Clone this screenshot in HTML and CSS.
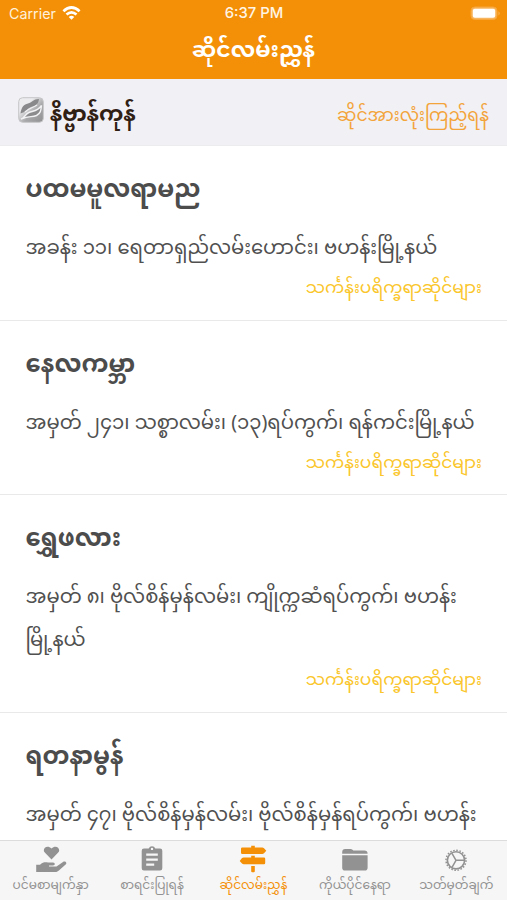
FILE: index.html
```html
<!DOCTYPE html>
<html lang="my">
<head>
<meta charset="utf-8">
<title>ဆိုင်လမ်းညွှန်</title>
<link rel="stylesheet" href="styles.css">
</head>
<body>
<div class="app">
  <header class="top">
    <div class="status">
      <div class="carrier"><span>Carrier</span>
        <svg width="19" height="14" viewBox="0 0 18 14" fill="none" stroke="#fff" stroke-width="2.7"><path d="M.9 5.2Q9-2.2 17.1 5.2M4 8.6q5-4.500 10 0"/><path d="M9 13.7 6.200 10.900q2.800-2.300 5.600 0z" fill="#fff" stroke="none"/></svg>
      </div>
      <time>6:37 PM</time>
      <div class="power">
        <svg width="31" height="15" viewBox="0 0 31 15"><rect x="1" y="1" width="26" height="12.5" rx="3.8" fill="#f8b55d" stroke="#f6a63c"/><rect x="2.800" y="2.800" width="22.400" height="9" rx="2" fill="#fff"/><path d="M28.500 5.200q2.400 2 0 4.300z" fill="#f8b55d"/></svg>
      </div>
    </div>
    <h1><span>ဆိုင်လမ်းညွှန်</span></h1>
  </header>
  <section class="brand">
    <svg class="logo" width="26" height="26" viewBox="0 0 26 26"><defs><linearGradient id="g" x1="0" y1="0" x2="1" y2="1"><stop offset=".3" stop-color="#ececef"/><stop offset=".6" stop-color="#a8a8aa"/><stop offset="1" stop-color="#8f8f91"/></linearGradient></defs><rect x=".7" y=".7" width="24.600" height="24.600" rx="4" fill="url(#g)" stroke="#c6c6c8"/><path d="M2.500 16.500C3.500 9.500 6 7.500 10 6.500c4-1 5-4.500 11-4.500-.5 3-1 4.500-3 6-2 1.600-3.500 1.300-6 2.500-3 1.500-4 4.500-9.500 6z" fill="#89898b"/><path d="M3 22c3.500-1 4-5 8-6.500 4-1.600 9-1.500 12.500-7-.5 5-1 8-5 10-5 2.300-7-.5-15.500 3.500z" fill="#8b8b8d" stroke="#f2f2f4" stroke-width="1.400"/><path d="M7 15c3.500-4 8-4 12-7" fill="none" stroke="#f0f0f2" stroke-width="1.200"/></svg>
    <h2>နိဗ္ဗာန်ကုန်</h2>
    <a class="all">ဆိုင်အားလုံးကြည့်ရန်</a>
  </section>
  <main class="shops">
    <article><h3>ပထမမူလရာမည</h3><p>အခန်း ၁၁၊ ရေတာရှည်လမ်းဟောင်း၊ ဗဟန်းမြို့နယ်</p><div class="kind">သင်္ကန်းပရိက္ခရာဆိုင်များ</div></article>
    <article><h3>နေလကမ္ဘာ</h3><p>အမှတ် ၂၄၁၊ သစ္စာလမ်း၊ (၁၃)ရပ်ကွက်၊ ရန်ကင်းမြို့နယ်</p><div class="kind">သင်္ကန်းပရိက္ခရာဆိုင်များ</div></article>
    <article><h3>ရွှေဖလား</h3><p>အမှတ် ၈၊ ဗိုလ်စိန်မှန်လမ်း၊ ကျိုက္ကဆံရပ်ကွက်၊ ဗဟန်း<br>မြို့နယ်</p><div class="kind">သင်္ကန်းပရိက္ခရာဆိုင်များ</div></article>
    <article><h3>ရတနာမွန်</h3><p>အမှတ် ၄၇၊ ဗိုလ်စိန်မှန်လမ်း၊ ဗိုလ်စိန်မှန်ရပ်ကွက်၊ ဗဟန်း</p></article>
  </main>
  <nav class="tabs">
    <a><svg width="32" height="28" viewBox="0 0 32 28"><path d="M16.500 14.500 9.800 7.600C6.500 3.800 12-.9 16.500 3.400c4.500-4.300 10 .4 6.700 4.200z"/><path d="M1.200 19.800H5c2.800-2.600 5-2.700 8-2.300h5c2.400 0 2.400 3 0 3h-4v1h7.500l6.500-4.500c2-1.200 4.300.5 2.900 2.200l-7 6.300c-1 .9-2 1.500-3.500 1.500H1.200z"/></svg><span>ပင်မစာမျက်နှာ</span></a>
    <a><svg width="32" height="28" viewBox="0 0 32 28"><path fill-rule="evenodd" d="M8 3.500h4.700a3.600 3.600 0 0 1 6.600 0H24q2.300 0 2.300 2.300v17.400q0 2.300-2.300 2.300H8q-2.300 0-2.300-2.300V5.800Q5.700 3.500 8 3.500zm8-.8a1.200 1.200 0 1 0 0 2.400 1.200 1.200 0 0 0 0-2.400zM10.200 8.500v2.200h11.600V8.500zm0 5v2.200h11.600v-2.200zm0 5v2.200h8v-2.200z"/></svg><span>စာရင်းပြုရန်</span></a>
    <a class="on"><svg width="32" height="28" viewBox="0 0 32 28"><path d="M5.200 2.500h9V.8h3.600v1.700h7.500q1 0 1.700.7l2.300 2.500-2.300 2.500q-.7.700-1.700.7H5.200q-1.200 0-1.200-1.200V3.700q0-1.200 1.200-1.200zM14.200 10.800h3.600v1.600H27q1.200 0 1.200 1.200v4.500q0 1.200-1.200 1.200H6.700q-1 0-1.700-.7l-2.300-2.700L5 13.100q.7-.7 1.700-.7h7.500zm0 10.200h3.600v5.200q0 1-1 1h-1.600q-1 0-1-1z"/></svg><span>ဆိုင်လမ်းညွှန်</span></a>
    <a><svg width="32" height="28" viewBox="0 0 32 28"><path d="M3.200 8.700V7q0-3 3-3h5.300q1.200 0 2 .8l.8.700h11q3.300 0 3.300 3.200zM3.200 10.300h25.400v12.500q0 2.800-2.800 2.800H6q-2.800 0-2.800-2.800z"/></svg><span>ကိုယ်ပိုင်နေရာ</span></a>
    <a><svg width="32" height="28" viewBox="0 0 32 28" fill="none" stroke="currentColor"><circle cx="16" cy="15.300" r="10" stroke-width="1.500" stroke-dasharray="1.570 1.571"/><circle cx="16" cy="15.300" r="8.600" stroke-width="1.600"/><path d="M16 15.300h8M16 15.300l-4-7M16 15.300l-4 7" stroke-width="1.500"/></svg><span>သတ်မှတ်ချက်</span></a>
  </nav>
</div>
</body>
</html>
```
FILE: styles.css
```css
* { box-sizing: border-box; }
body { margin: 0; font-family: "Noto Sans Myanmar", "Noto Sans", sans-serif; background: #fff; color: #4c4c4c; }
h1, h2, h3, p { margin: 0; font-weight: 400; }
.app { width: 507px; height: 900px; display: flex; flex-direction: column; overflow: hidden; }
.top { height: 79px; flex: none; background: #f49007; color: #fff; }
.status { height: 26px; display: grid; grid-template-columns: 1fr auto 1fr; align-items: center; padding: 0 6px 0 9px; font: 14.3px Inter, "Liberation Sans", sans-serif; }
.carrier { display: flex; align-items: center; gap: 6px; color: #fff0dc; }
.status time { margin-left: -2px; font-weight: 500; font-size: 14.8px; color: #fff5e5; }
.power { display: flex; justify-content: flex-end; }
h1 { height: 52px; line-height: 53px; text-align: center; font-size: 22px; font-weight: 700; white-space: nowrap; }
.brand { height: 67px; flex: none; display: flex; align-items: center; padding: 0 18px; background: #f1f0f5; border-bottom: 1px solid #ececef; white-space: nowrap; }
.logo { margin: -4px 6px 0 0; }
.brand h2 { padding-top: 8px; line-height: 58px; font-size: 22px; font-weight: 700; color: #302014; }
.all { margin-left: auto; padding-top: 10px; line-height: 57px; font-size: 17.2px; color: #f3a43a; }
.shops { flex: 1; min-height: 0; overflow: hidden; }
article { padding: 23px 25px 9.7px 25.5px; border-bottom: 1px solid #e9e9e9; }
h3 { height: 46px; line-height: 46px; font-size: 24.3px; font-weight: 700; white-space: nowrap; }
p { margin-top: 13px; line-height: 43px; font-size: 19.58px; color: #505050; white-space: nowrap; }
.kind { height: 39px; line-height: 37px; text-align: right; font-size: 17.1px; color: #fac62c; white-space: nowrap; }
.tabs { height: 60px; flex: none; display: grid; grid-template-columns: repeat(5, 1fr); background: #f6f6f6; border-top: 1px solid #dcdcdd; color: #929292; }
.tabs a { display: flex; flex-direction: column; align-items: center; padding-top: 4px; }
.tabs svg { fill: currentColor; }
.tabs a:last-child svg { fill: none; }
.tabs span { line-height: 26px; height: 26px; font-size: 12.15px; white-space: nowrap; }
.tabs .on { color: #f49007; }
```
